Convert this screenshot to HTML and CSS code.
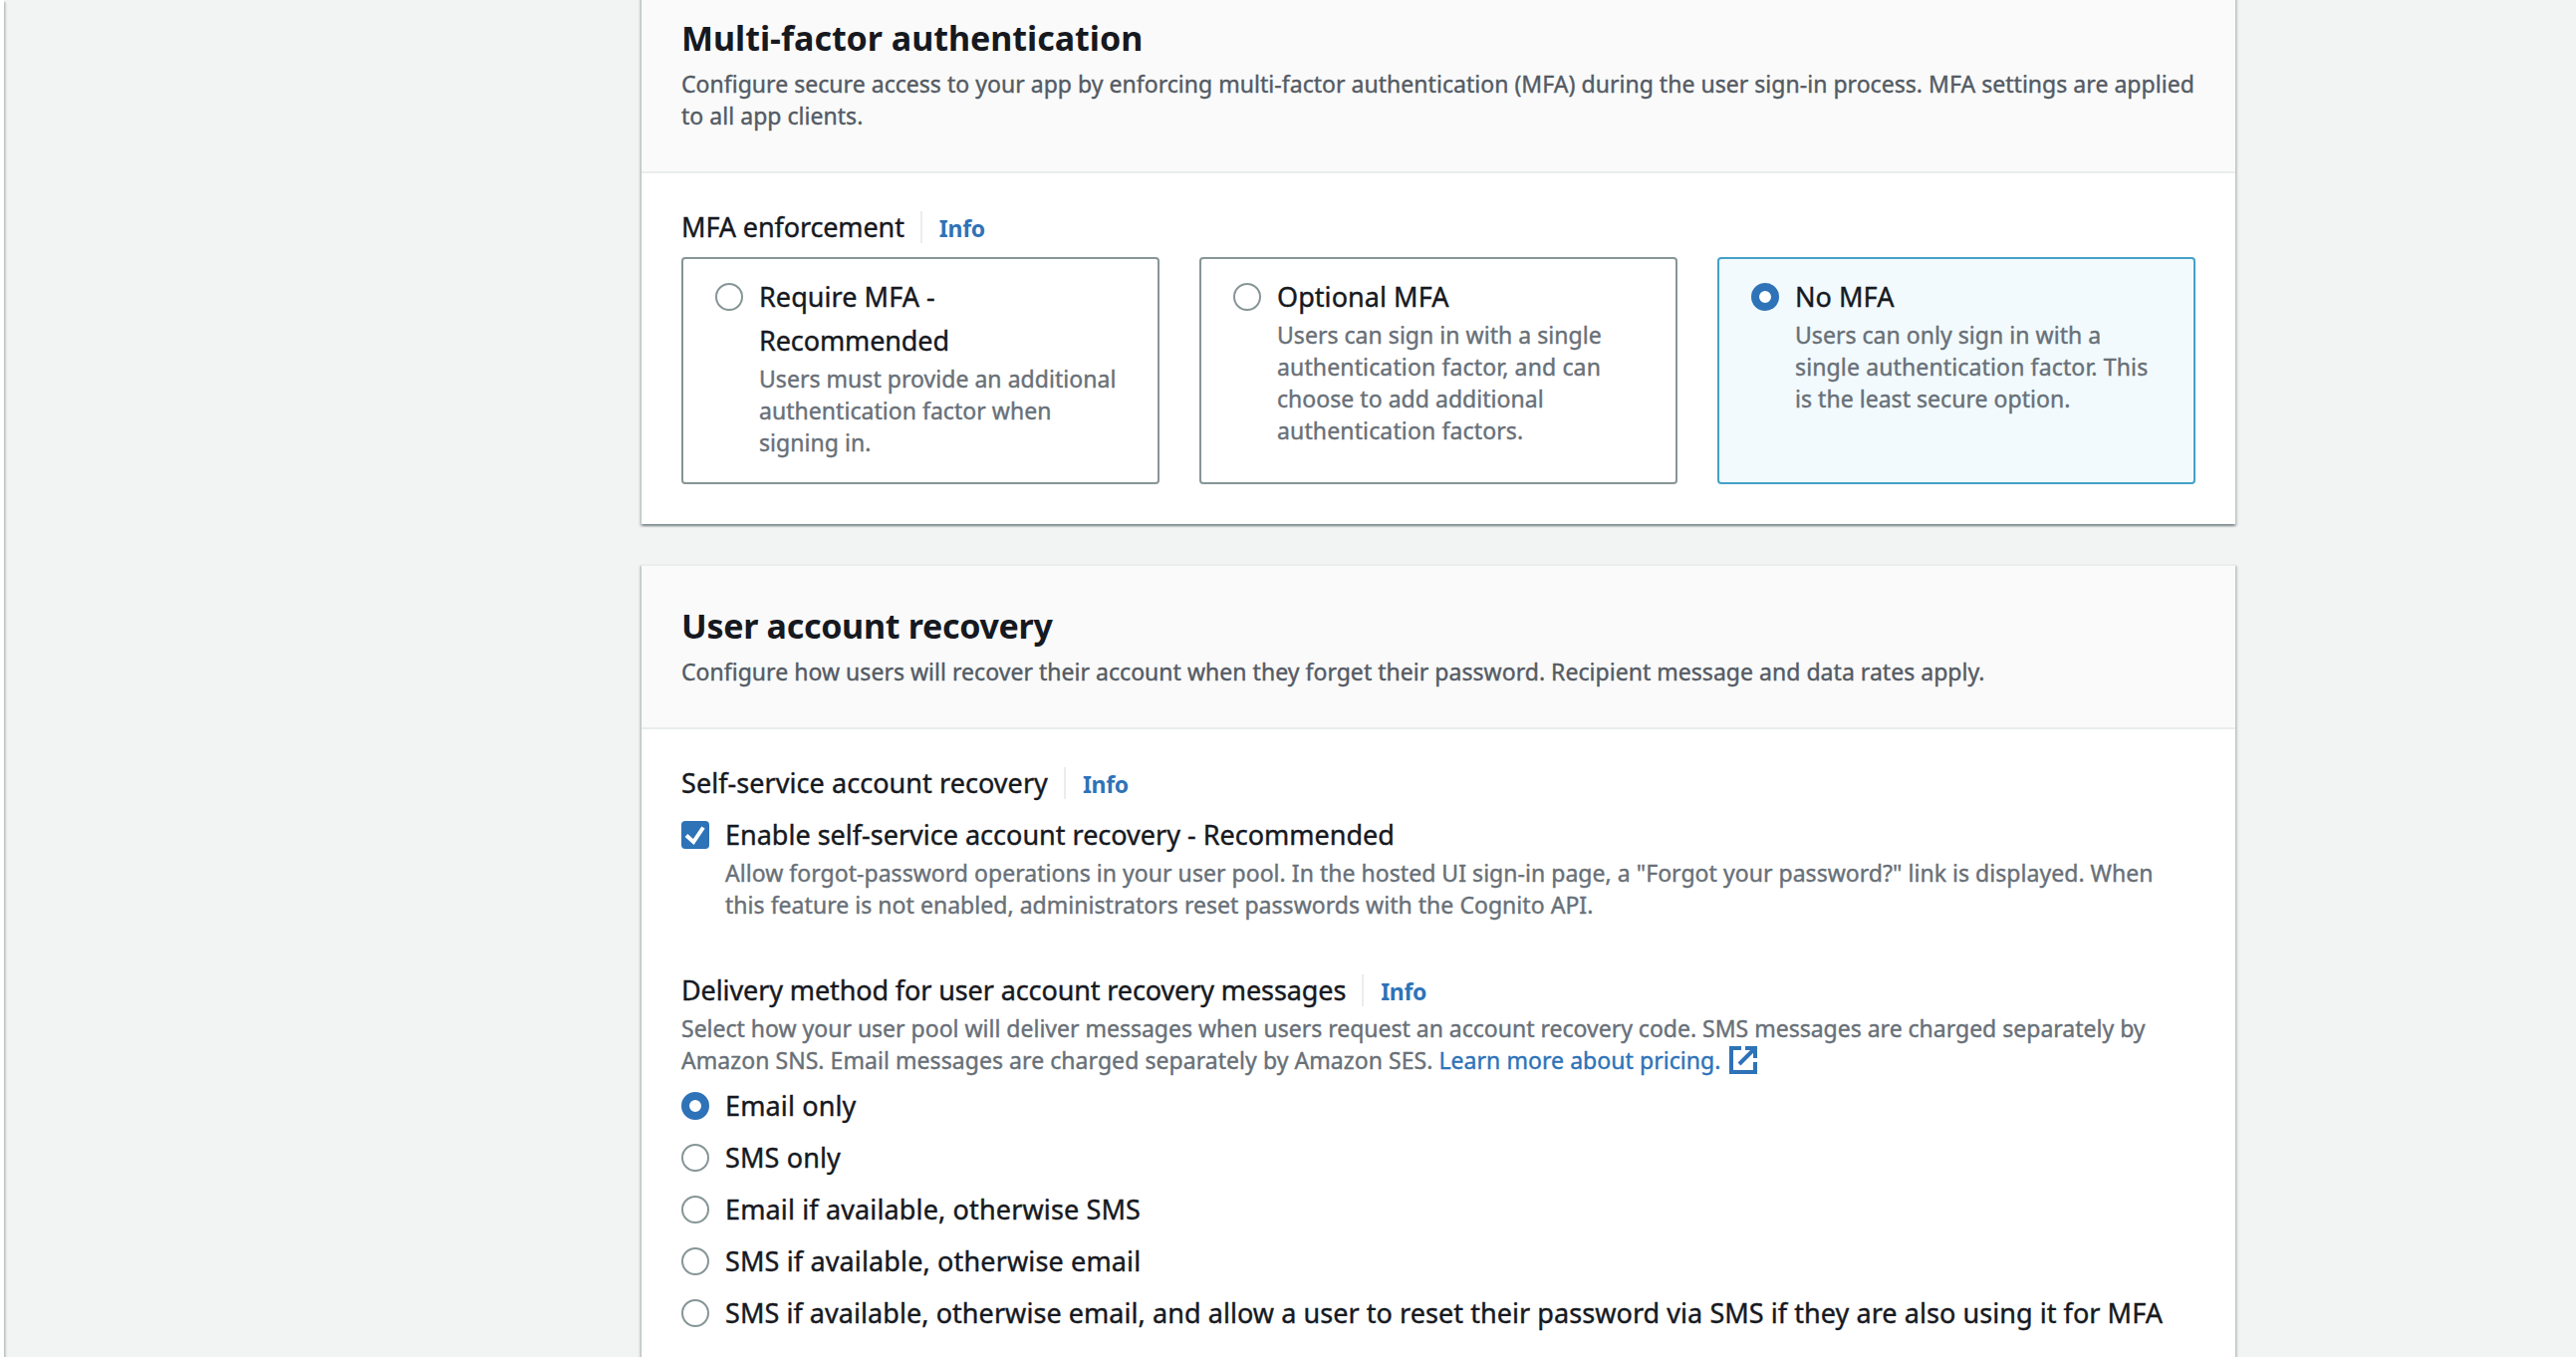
FILE: index.html
```html
<!DOCTYPE html>
<html lang="en">
<head>
<meta charset="utf-8">
<title>User pool sign-in settings</title>
<link rel="stylesheet" href="styles.css">
</head>
<body>
<div class="layout">
<nav class="nav-edge"></nav>
<main class="page">
  <section class="card">
    <header class="card-header">
      <h2 class="title">Multi-factor authentication</h2>
      <p class="desc">Configure secure access to your app by enforcing multi-factor authentication (MFA) during the user sign-in process. MFA settings are applied<br>to all app clients.</p>
    </header>
    <div class="card-body">
      <div class="field-label"><span class="snug">MFA enforcement</span><a class="info">Info</a></div>
      <div class="tiles">
        <label class="tile">
          <span class="radio"></span>
          <span><span class="label">Require MFA -<br><span class="snug">Recommended</span></span>
          <span class="hint">Users must provide an additional<br>authentication factor when<br>signing in.</span></span>
        </label>
        <label class="tile">
          <span class="radio"></span>
          <span><span class="label">Optional MFA</span>
          <span class="hint">Users can sign in with a single<br><span class="loose">authentication factor, and can</span><br>choose to add additional<br><span class="loose">authentication factors.</span></span></span>
        </label>
        <label class="tile tile-selected">
          <span class="radio radio-on"></span>
          <span><span class="label">No MFA</span>
          <span class="hint">Users can only sign in with a<br><span class="loose">single authentication factor. This</span><br>is the least secure option.</span></span>
        </label>
      </div>
    </div>
  </section>

  <section class="card">
    <header class="card-header">
      <h2 class="title title-snug">User account recovery</h2>
      <p class="desc">Configure how users will recover their account when they forget their password. Recipient message and data rates apply.</p>
    </header>
    <div class="card-body">
      <div class="field-label">Self-service account recovery<a class="info">Info</a></div>
      <label class="choice choice-first">
        <svg class="checkbox" viewBox="0 0 28 28"><rect width="28" height="28" rx="4" fill="#2e73b8"/><path d="M5 14.5l7.2 6.5L22 6.5" fill="none" stroke="#fff" stroke-width="4"/></svg>
        <span><span class="label even">Enable self-service account recovery - Recommended</span>
        <span class="hint">Allow forgot-password operations in your user pool. In the hosted UI sign-in page, a "Forgot your password?" link is displayed. When<br>this feature is not enabled, administrators reset passwords with the Cognito API.</span></span>
      </label>
      <div class="field-label field-second"><span class="snug">Delivery method for user account recovery messages</span><a class="info">Info</a></div>
      <p class="hint"><span class="even">Select how your user pool will deliver messages when users request an account recovery code. SMS messages are charged separately by</span><br><span class="open">Amazon SNS. Email messages are charged separately by Amazon SES. <a class="link">Learn more about pricing.</a></span><svg class="external" viewBox="0 0 28 28" fill="none" stroke="#2e73b8" stroke-width="4"><path d="M12 2H2v24h24V16M16 2h10v10M25 3L10 18"/></svg></p>
      <div class="choices">
        <label class="choice"><span class="radio radio-on"></span><span class="label loose">Email only</span></label>
        <label class="choice"><span class="radio"></span><span class="label loose">SMS only</span></label>
        <label class="choice"><span class="radio"></span><span class="label loose">Email if available, otherwise SMS</span></label>
        <label class="choice"><span class="radio"></span><span class="label loose">SMS if available, otherwise email</span></label>
        <label class="choice"><span class="radio"></span><span class="label">SMS if available, otherwise email, and allow a user to reset their password via SMS if they are also using it for MFA</span></label>
      </div>
    </div>
  </section>
</main>
</div>
</body>
</html>
```
FILE: styles.css
```css
* { box-sizing: border-box; }
html, body { height: 100%; overflow: hidden; }
body { margin: 0; background: #f2f3f3; color: #16191f; font-family: "Noto Sans", "Open Sans", sans-serif; }
h2, p { margin: 0; }
.layout { display: flex; height: 1362px; }
.nav-edge { width: 4px; flex: none; background: #fff; box-shadow: 0 2px 2px 0 rgba(0,28,36,.3), 2px 2px 2px 0 rgba(0,28,36,.15); }
.page { display: flex; flex-direction: column; gap: 40px; margin: -24px 0 0 640px; }
.card { width: 1600px; background: #fff; flex: none; border-top: 2px solid #eaeded; box-shadow: 0 2px 2px 0 rgba(0,28,36,.3), 2px 2px 2px 0 rgba(0,28,36,.15), -2px 2px 2px 0 rgba(0,28,36,.15); }
.card-header { background: #fafafa; border-bottom: 2px solid #eaeded; padding: 38px 40px 40px; }
.title { font-size: 34px; line-height: 44px; margin-bottom: 8px; font-weight: 700; letter-spacing: -0.03px; white-space: nowrap; }
.title-snug { letter-spacing: -0.3px; }
.desc, .hint { font-size: 23px; line-height: 32px; letter-spacing: 0.04px; white-space: nowrap; display: block; -webkit-text-stroke: 0.4px currentColor; }
.desc { color: #545b64; letter-spacing: 0.035px; }
.hint { color: #687078; }
.card-body { padding: 32px 40px 40px; }
.field-label, .label { display: flex; font-size: 27px; line-height: 44px; letter-spacing: 0.06px; white-space: nowrap; -webkit-text-stroke: 0.4px currentColor; }
.label { display: block; }
.snug { letter-spacing: -0.11px; }
.even { letter-spacing: 0; }
.open { letter-spacing: 0.06px; }
.loose { letter-spacing: 0.14px; }
.info { align-self: center; margin-left: 16px; padding-left: 17px; border-left: 2px solid #eaeded; font-size: 23px; line-height: 30px; padding-top: 2px; font-weight: 700; letter-spacing: -0.3px; color: #2e73b8; -webkit-text-stroke: 0; }
.tiles { display: grid; grid-template-columns: repeat(3, 480px); gap: 40px; margin-top: 8px; }
.tile { display: flex; gap: 16px; height: 228px; padding: 16px 32px 24px; border: 2px solid #879596; border-radius: 4px; }
.tile-selected { border-color: #44a1c7; background: #f2fafd; }
.radio { flex: none; width: 28px; height: 28px; margin-top: 8px; border: 2px solid #879596; border-radius: 50%; background: #fff; }
.radio-on { border: 8px solid #2e73b8; }
.choice { display: flex; gap: 16px; }
.choice-first { margin-top: 8px; }
.checkbox { flex: none; width: 28px; height: 28px; margin-top: 8px; }
.field-second { margin-top: 48px; }
.choices { display: flex; flex-direction: column; gap: 8px; margin-top: 8px; }
.link { color: #2e73b8; }
.external { width: 28px; height: 28px; margin-left: 8px; vertical-align: -5px; }
```
